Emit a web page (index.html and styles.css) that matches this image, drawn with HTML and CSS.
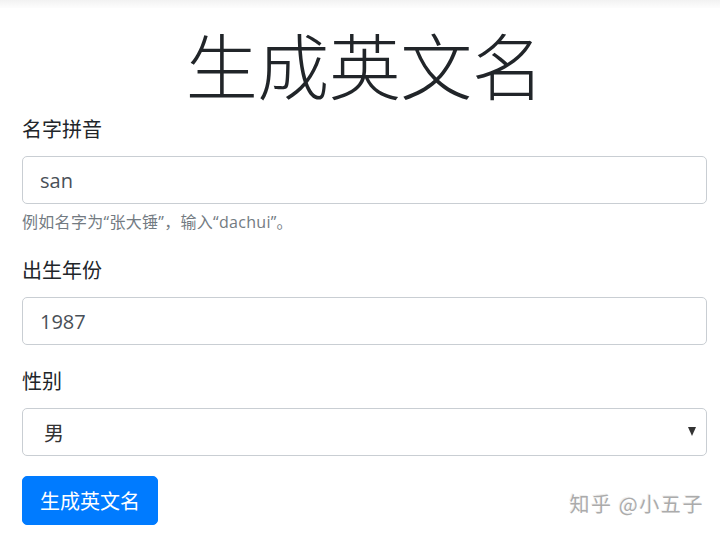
FILE: index.html
```html
<!DOCTYPE html>
<html lang="zh-CN">
<head>
<meta charset="utf-8">
<title>生成英文名</title>
<link rel="stylesheet" href="styles.css">
</head>
<body>
<div class="topbar"></div>
<main class="container">
  <h1 class="title">生成英文名</h1>
  <form class="form">
    <div class="group">
      <label class="label" for="pinyin">名字拼音</label>
      <input class="control" id="pinyin" type="text" value="san">
      <div class="help">例如名字为“张大锤”，输入“dachui”。</div>
    </div>
    <div class="group">
      <label class="label" for="year">出生年份</label>
      <input class="control" id="year" type="text" value="1987">
    </div>
    <div class="group">
      <label class="label" for="gender">性别</label>
      <div class="select-wrap">
        <select class="control select" id="gender">
          <option>男</option>
          <option>女</option>
        </select>
      </div>
    </div>
    <button class="btn" type="button">生成英文名</button>
  </form>
</main>
<div class="watermark">知乎 @小五子</div>
</body>
</html>
```
FILE: styles.css
```css
html, body {
  margin: 0;
  padding: 0;
  background: #fff;
}
body {
  position: relative;
  width: 720px;
  height: 536px;
  overflow: hidden;
  font-family: "Open Sans", "Noto Sans CJK SC", sans-serif;
  color: #212529;
  font-size: 20px;
}
.topbar {
  height: 8px;
  background: linear-gradient(#f2f2f2, #fdfdfd);
}
.container {
  padding: 0 13px 0 22px;
}
.title {
  margin: 7px 0 0 0;
  font-family: "Noto Sans CJK SC", sans-serif;
  font-weight: 300;
  font-size: 72px;
  line-height: 96px;
  text-align: center;
  color: #212529;
  letter-spacing: -0.5px;
}
.form {
  display: flex;
  flex-direction: column;
}
.group {
  display: flex;
  flex-direction: column;
  margin-bottom: 18px;
}
.label {
  font-family: "Noto Sans CJK SC", sans-serif;
  font-size: 20px;
  line-height: 30px;
  margin-top: 3px;
  margin-bottom: 12px;
  color: #212529;
}
.control {
  box-sizing: border-box;
  height: 48px;
  width: 100%;
  border: 1px solid #c9ced3;
  border-radius: 5px;
  padding: 0 17px;
  font-family: "Open Sans", "Noto Sans CJK SC", sans-serif;
  font-size: 20px;
  color: #495057;
  background: #fff;
  outline: none;
}
.help {
  font-family: "Open Sans", "Noto Sans CJK SC", sans-serif;
  font-size: 16px;
  line-height: 24px;
  margin-top: 6px;
  color: #737b82;
  letter-spacing: 0.3px;
}
.select-wrap {
  position: relative;
}
.select {
  appearance: none;
  -webkit-appearance: none;
  padding-left: 21px;
  color: #333;
  font-family: "Noto Sans CJK SC", sans-serif;
}
.select-wrap::after {
  content: "";
  position: absolute;
  right: 11px;
  top: 19px;
  border-left: 4.5px solid transparent;
  border-right: 4.5px solid transparent;
  border-top: 9px solid #333;
  pointer-events: none;
}
.btn {
  align-self: flex-start;
  margin-top: 2px;
  height: 49px;
  padding: 0 17px;
  border: 1px solid #007bff;
  border-radius: 5px;
  background: #007bff;
  color: #fff;
  font-family: "Noto Sans CJK SC", sans-serif;
  font-size: 20px;
  line-height: 47px;
}
.watermark {
  position: absolute;
  right: 16px;
  bottom: 18px;
  font-family: "Noto Sans CJK SC", sans-serif;
  font-size: 20px;
  line-height: 28px;
  color: #ababab;
  text-shadow: 1px 1px 0 #fff, -1px -1px 0 #f0f0f0;
  letter-spacing: 1.6px;
}
```
